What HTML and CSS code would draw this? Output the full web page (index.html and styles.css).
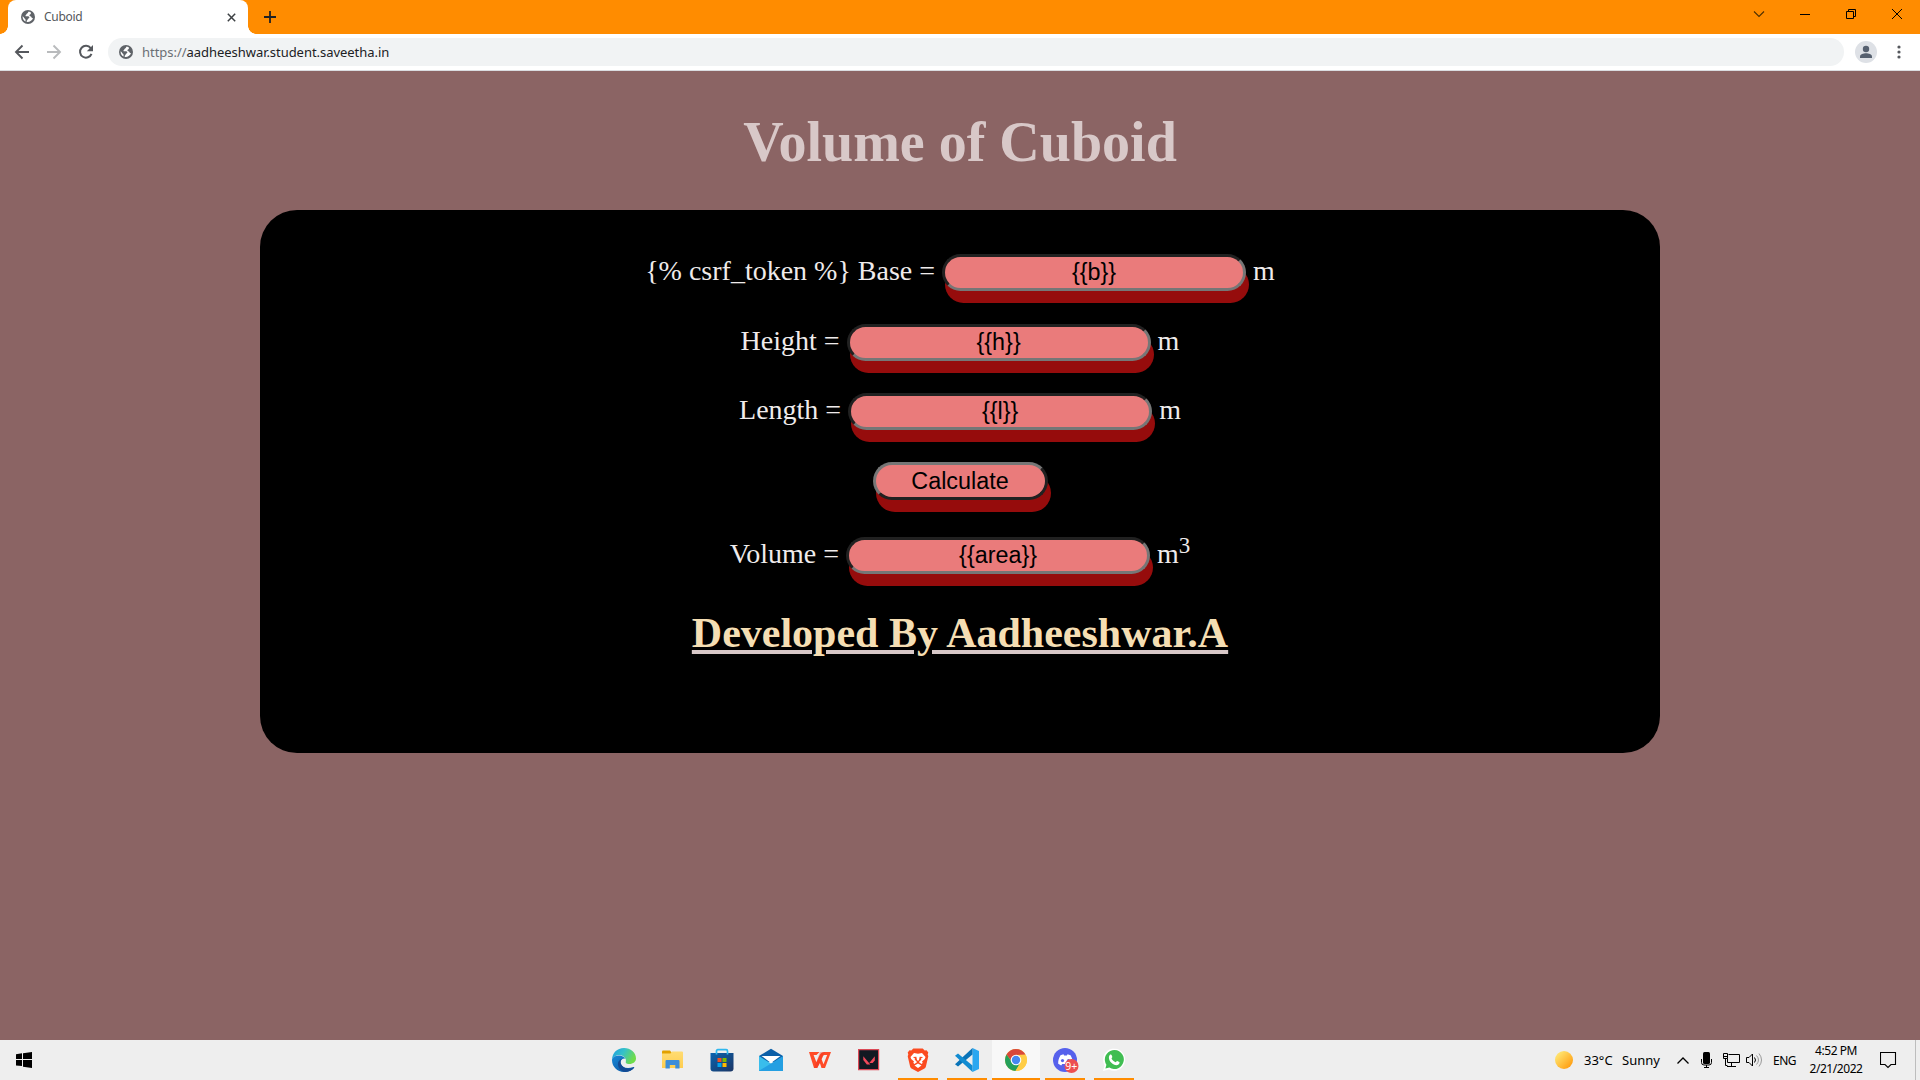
FILE: index.html
```html
<!DOCTYPE html>
<html lang="en">
<head>
<meta charset="utf-8">
<title>Cuboid</title>
<link rel="stylesheet" href="styles.css">
</head>
<body>
<svg width="0" height="0" class="defs">
  <defs>
    <symbol id="globe" viewBox="0 0 14 14"><circle cx="7" cy="7" r="7" fill="#5f6368"/><path d="M7.8 1.6C7 2.4 6.9 3.3 5.8 3.7c-.6.3-.4 1.2-1.1 1.5-.5.3-.3 1 .3 1 1.200 0 2.400-.2 3.100.6.5.7.2 1.500-.6 1.800-.9.300-.6 1.300-1.300 1.700-.5.300-.6 1-.4 1.700C8.600 12.300 11.400 10.700 12.100 8.100c-1 .3-1.600-.2-1.700-1-.1-.8-1-.7-1.600-1.100-.8-.6-.1-1.600.6-1.700.6-.1.300-1 .7-1.500C9.400 2.100 8.600 1.700 7.800 1.600zM1.600 6.300c-.2 2.400 1.200 4.500 3 5.300.1-.9-.2-1.300-.1-2 .1-.8-1-1-1.300-1.700C2.900 7.200 2.200 6.800 1.600 6.300z" fill="#fff"/></symbol>
    <linearGradient id="edgeTop" x1="0" y1="0" x2="1" y2="0.400"><stop offset="0" stop-color="#1b9de2"/><stop offset=".5" stop-color="#35c1c9"/><stop offset="1" stop-color="#6fdc4b"/></linearGradient>
    <linearGradient id="edgeLow" x1="0" y1="0" x2="1" y2="1"><stop offset="0" stop-color="#1689d8"/><stop offset="1" stop-color="#0c4f9c"/></linearGradient>
    <linearGradient id="bag" x1="0" y1="0" x2="1" y2="1"><stop offset="0" stop-color="#0a64b0"/><stop offset="1" stop-color="#1c3564"/></linearGradient>
    <linearGradient id="sun" x1="0" y1="0" x2="1" y2="1"><stop offset="0.200" stop-color="#ffe06a"/><stop offset="1" stop-color="#ff9100"/></linearGradient>
    <linearGradient id="fold" x1="0" y1="0" x2="0" y2="1"><stop offset="0" stop-color="#ffdc73"/><stop offset="1" stop-color="#ffcd4f"/></linearGradient>
  </defs>
</svg>

<header class="tabstrip">
  <div class="tab">
    <svg class="favicon" width="14" height="14"><use href="#globe"/></svg>
    <span class="tab-title">Cuboid</span>
    <svg class="tab-close" width="9" height="9"><path d="M.8.8l7.400 7.400M8.200.8L.8 8.200" stroke="#3c4043" stroke-width="1.500"/></svg>
  </div>
  <svg class="new-tab" width="12" height="12"><path d="M6 0v12M0 6h12" stroke="#202124" stroke-width="1.800"/></svg>
  <div class="window-buttons">
    <svg width="46" height="28"><path d="M18 11.500l5 5 5-5" fill="none" stroke="#4d3000" stroke-width="1.100"/></svg>
    <svg width="46" height="28"><path d="M18 14.500h10" stroke="#000"/></svg>
    <svg width="46" height="28"><path d="M18.500 11.500h7v7h-7zM20.500 11.500v-2h7v7h-2" fill="none" stroke="#000"/></svg>
    <svg width="46" height="28"><path d="M18 9l10 10M28 9l-10 10" stroke="#000"/></svg>
  </div>
</header>

<nav class="toolbar">
  <div class="nav-buttons">
    <svg width="32" height="36"><path d="M29 18H16.500M22.500 11.500L16 18l6.500 6.500" fill="none" stroke="#55585d" stroke-width="1.900"/></svg>
    <svg width="32" height="36"><path d="M15 18h12.500M21.500 11.500L28 18l-6.500 6.500" fill="none" stroke="#b9bbbd" stroke-width="1.900"/></svg>
    <svg width="32" height="36"><path d="M26.700 14.200a5.900 5.900 0 1 0 .8 5.600" fill="none" stroke="#55585d" stroke-width="2"/><path d="M29 11v6.200h-6.200z" fill="#55585d"/></svg>
  </div>
  <div class="omnibox">
    <svg width="14" height="14"><use href="#globe"/></svg>
    <span class="url"><span class="scheme">https://</span>aadheeshwar.student.saveetha.in</span>
  </div>
  <svg class="avatar" width="22" height="22"><circle cx="11" cy="11" r="11" fill="#dee1e6"/><circle cx="11" cy="8" r="3.200" fill="#56606f"/><path d="M5 17v-1.500c0-2.200 3.500-3.300 6-3.300s6 1.100 6 3.300V17z" fill="#56606f"/></svg>
  <svg class="menu" width="4" height="14"><g fill="#55585d"><circle cx="2" cy="2" r="1.600"/><circle cx="2" cy="7" r="1.600"/><circle cx="2" cy="12" r="1.600"/></g></svg>
</nav>

<main class="page">
  <h1>Volume of Cuboid</h1>
  <form class="card">
    <div class="row">{% csrf_token %} Base = <input class="pill" type="text" value="{{b}}"> m</div>
    <div class="row">Height = <input class="pill" type="text" value="{{h}}"> m</div>
    <div class="row">Length = <input class="pill" type="text" value="{{l}}"> m</div>
    <div class="row"><button class="pill calc" type="button">Calculate</button></div>
    <div class="row result">Volume = <input class="pill" type="text" value="{{area}}"> m<sup>3</sup></div>
    <h2>Developed By Aadheeshwar.A</h2>
  </form>
</main>

<footer class="taskbar">
  <svg class="start" width="16" height="16"><path d="M0 2.200L6 1.300V7H0zM7 1.200L16 0v7H7zM0 8h6v6L0 13.500zM7 8h9v8l-9-1.200z"/></svg>
  <div class="apps">
    <div class="app"><svg width="24" height="24" viewBox="0 0 24 24"><path d="M12 0C5 0 .3 5 0 11.500 2 7.500 6 6.200 9 7.200c4 1.300 5.500 4 4.800 6.500-.2 1 .2 2.300 3.500 2.300 4 0 6.700-2.500 6.700-5.500C24 4.500 18.500 0 12 0z" fill="url(#edgeTop)"/><path d="M0 11.500C1 8.500 4.500 7 8 7.500c3.500.5 5.500 3 5.500 3-3.500-.5-5.500 2-4.700 5 1 3.800 6 6 12.700 3.500.5-.2 1 .1.600.7C20 22.500 16.500 24 12 24 5 24-.2 18.500 0 11.500z" fill="url(#edgeLow)"/><path d="M8.800 15.500c-.8-3 .7-4.800 2.700-5-3.500.5-6 3-5.500 6.500.4 3.700 3.500 6.500 7.500 6.900 4 0 7-2 8.800-4.400-6 2.800-12 .5-13.500-4z" fill="#134a93"/></svg></div>
    <div class="app"><svg class="folder" width="24" height="24" viewBox="0 0 24 24"><path d="M2 3.500q0-1 1-1h7l2 2.500v3H2z" fill="#e2a100"/><path d="M2 5.500h8.500l1.500-2h10q1 0 1 1V20H2z" fill="url(#fold)"/><path d="M5.500 20.500V13q0-1 1-1h12q1 0 1 1v7.500h-4.200V17h-5.500v3.500z" fill="#3c8dd9"/></svg></div>
    <div class="app"><svg width="24" height="24" viewBox="0 0 24 24"><path d="M.5 5h23v15.500q0 3-3 3h-17q-3 0-3-3z" fill="url(#bag)"/><path d="M6.500 6.500V3q0-1.300 1.300-1.300h8.400q1.300 0 1.300 1.300v3.500" fill="none" stroke="#2fb7ee" stroke-width="1.700"/><path d="M7.500 10h4v4h-4z" fill="#f25022"/><path d="M12.500 10h4v4h-4z" fill="#7fba00"/><path d="M7.500 15h4v4h-4z" fill="#00a4ef"/><path d="M12.500 15h4v4h-4z" fill="#ffb900"/></svg></div>
    <div class="app"><svg width="24" height="24" viewBox="0 0 24 24"><path d="M0 8L12 .8 24 8v6H0z" fill="#0b5fa8"/><path d="M2.500 8h19l-9.500 7z" fill="#fff"/><path d="M0 8l24 15H0z" fill="#39bdec"/><path d="M24 8v15H0v-.3L12 15.500z" fill="#249fe2"/></svg></div>
    <div class="app"><svg width="24" height="24" viewBox="0 0 24 24"><path d="M1 4h10.500l-3 3H5.600l2.800 7.200 3.300-7.200q1.400-3 4.800-3H23l-6 16h-3.500l-1.600-5-2.600 5H6z" fill="#ff4b27"/><path d="M19.200 7h-2.600q-1.200 0-1.700 1.200l-1.300 3 1.900 5z" fill="#efeeee"/><path d="M12 4h5l-5.800 12L9.300 20H6.100z" fill="#e8281c" opacity=".3"/></svg></div>
    <div class="app"><svg width="24" height="24" viewBox="0 0 24 24"><path d="M1.600 1.600h20v20h-20z" fill="#121922" stroke="#db4a57" stroke-width="1.200"/><path d="M6.300 8.200l7 8.200H9.800l-3.500-4.500zM17.800 8.200v4.200L15.600 15h-3.300z" fill="#f1495a"/></svg></div>
    <div class="app running"><svg width="24" height="24" viewBox="0 0 24 24"><path d="M7.300.5h9.400l2 2 1.800-.3 1.800 2.300-.6 2 .6 1.700-2.400 10.300q-.4 1.300-1.400 2L12 24l-6.500-3.500q-1-.7-1.400-2L1.700 8.200l.6-1.700-.6-2 1.800-2.300 1.800.3z" fill="#fb4b20"/><path d="M8 5l4 .7L16 5l3.500 4-.7 2-2.800 2.500.7 1.200-1 1.300-2.500-1.500.3-1.200 1.800-1.600-.3-1.200 2.200-1.400-3.500-.3-.8 3.500-.9.400-.9-.4-.8-3.500-3.500.3L9 10.500l-.3 1.200 1.800 1.600.3 1.200L8.300 16l-1-1.300.7-1.200L5.200 11l-.7-2zM12 15.500l3.500 2L12 20l-3.500-2.500z" fill="#fff"/></svg></div>
    <div class="app running"><svg width="24" height="24" viewBox="0 0 24 24"><path d="M17.500 0L24 3v18l-6.500 3z" fill="#2aa7f0"/><path d="M17.500 0v6.500L3 18.500 0 16.200z" fill="#0873b8"/><path d="M0 7.800L3 5.500l14.500 12V24z" fill="#118bd1"/></svg></div>
    <div class="app running active"><svg width="24" height="24" viewBox="0 0 24 24"><circle cx="12" cy="12" r="11" fill="#ffcf48"/><path d="M2.500 6.500A11 11 0 0 1 21.500 6.500L12 7 8 14z" fill="#d9483b"/><path d="M2.500 6.500A11 11 0 0 0 11.500 23l5-8.500L8 14z" fill="#24a05a"/><path d="M12 7h9.800a11 11 0 0 1-10.300 16l5-8.500z" fill="#ffcd46"/><circle cx="12" cy="12" r="5.300" fill="#fff"/><circle cx="12" cy="12" r="4.200" fill="#4688f1"/></svg></div>
    <div class="app running"><svg width="26" height="26" viewBox="0 0 26 26" class="discord"><circle cx="12" cy="12" r="12" fill="#5661ec"/><path d="M7.500 7.300l3-1 .6 1.200h2.800l.6-1.200 3 1c1.500 2.500 2.500 5.500 2.300 8.500l-3 1.700-1-1.500h-6.600l-1 1.500-3-1.700c-.2-3 .8-6 2.300-8.500z" fill="#fff"/><circle cx="9.500" cy="12.600" r="1.600" fill="#5661ec"/><circle cx="15.500" cy="12.600" r="1.600" fill="#5661ec"/><circle cx="18.500" cy="18" r="7" fill="#ed4f50"/><text x="18.200" y="21.600" text-anchor="middle" class="badge-text">9+</text></svg></div>
    <div class="app running"><svg width="24" height="24" viewBox="0 0 24 24"><path d="M1 23l1.600-5.800A11 11 0 1 1 7 21.400z" fill="#fff"/><path d="M3.400 20.600l1-3.900a9.500 9.500 0 1 1 3 2.900z" fill="#40bd52"/><path d="M8 6.800c.5-.5 1.300-.5 1.600.2l.7 1.800c.2.600-.8 1.500-.8 1.800 1 1.900 2.300 3 4.100 3.700.5.100 1.100-1.400 1.600-1.200l2.100 1c.7.400-.1 3.200-2.800 3.200-3.500 0-7.600-4-7.600-7.500 0-1.300.5-2.400 1.100-3z" fill="#fff"/></svg></div>
  </div>
  <div class="tray">
    <svg class="sun" width="18" height="18"><circle cx="9" cy="9" r="9" fill="url(#sun)"/></svg>
    <span class="temp">33°C</span><span class="sky">Sunny</span>
    <svg class="up" width="12" height="7"><path d="M.5 6.500L6 1l5.500 5.500" fill="none" stroke="#000" stroke-width="1.300"/></svg>
    <svg class="mic" width="11" height="16"><rect x="2" y="0" width="7" height="12" rx="1.500"/><path d="M.5 7v3.500q0 2.500 2.500 2.500h5q2.500 0 2.500-2.500V7M5.500 13v2.500M3 15.500h5" fill="none" stroke="#000"/></svg>
    <svg class="net" width="17" height="14"><path d="M5.500 1.500h11v8h-12V5.500M8.500 9.500v4M4 13.500h9M.5.500h4v5h-4zM0 3.500h4M2.500 5.500v7h2" fill="none" stroke="#000"/></svg>
    <svg class="vol" width="17" height="14"><path d="M.5 4.500H3L6.500 1v12L3 9.500H.5z" fill="none" stroke="#000"/><path d="M8.500 4.500q2 2.500 0 5" fill="none" stroke="#000"/><path d="M10.500 2.500q4 4.500 0 9M13 .5q5 6.500 0 13" fill="none" stroke="#999"/></svg>
    <span class="lang">ENG</span>
    <div class="clock"><span class="time">4:52 PM</span><span class="date">2/21/2022</span></div>
    <svg class="notes" width="17" height="17"><path d="M.5.500h15v12H11l-3 3-3-3H.5z" fill="none" stroke="#000" stroke-width="1.100"/></svg>
    <span class="peek"></span>
  </div>
</footer>
</body>
</html>
```
FILE: styles.css
```css
* { box-sizing: border-box; }
body {
  margin: 0;
  width: 1920px;
  height: 1080px;
  overflow: hidden;
  display: flex;
  flex-direction: column;
  background: #8b6464;
  font-family: "Noto Sans", sans-serif;
}
svg { display: block; flex: none; }
.defs { position: absolute; }

.tabstrip {
  height: 34px;
  flex: none;
  display: flex;
  background: #ff8c00;
  padding-left: 8px;
}
.tab {
  position: relative;
  width: 240px;
  background: #fff;
  border-radius: 8px 8px 0 0;
  display: flex;
  align-items: center;
  padding: 0 12px 0 13px;
}
.tab::before, .tab::after {
  content: "";
  position: absolute;
  bottom: 0;
  width: 8px;
  height: 8px;
}
.tab::before { left: -8px; background: radial-gradient(circle at 0 0, transparent 7.5px, #fff 8px); }
.tab::after { right: -8px; background: radial-gradient(circle at 100% 0, transparent 7.5px, #fff 8px); }
.tab-title { margin-left: 9px; font-size: 12px; line-height: 34px; color: #54575b; letter-spacing: -.3px; }
.tab-close { margin-left: auto; }
.new-tab { margin: 11px 0 0 16px; }
.window-buttons { display: flex; margin-left: auto; }

.toolbar {
  height: 37px;
  flex: none;
  display: flex;
  align-items: center;
  background: #fff;
  border-bottom: 1px solid #dadce0;
}
.nav-buttons { display: flex; width: 108px; }
.omnibox {
  width: 1736px;
  height: 28px;
  border-radius: 14px;
  background: #f1f3f4;
  display: flex;
  align-items: center;
  padding-left: 11px;
}
.url { margin-left: 9px; font-size: 13px; line-height: 28px; color: #202124; white-space: nowrap; letter-spacing: -.04px; }
.scheme { color: #6b6f74; }
.avatar { margin-left: 11px; }
.menu { margin-left: 20px; }

.page {
  flex: 1;
  font-family: "Liberation Serif", serif;
  font-size: 28px;
}
h1 {
  margin: 0;
  height: 139px;
  padding-top: 39px;
  font-size: 56px;
  line-height: 64px;
  text-align: center;
  color: #d8c8c8;
}
.card {
  width: 1400px;
  height: 543px;
  margin: 0 auto;
  padding-top: 42px;
  border-radius: 37px;
  background: #000;
  color: #efebeb;
  text-align: center;
}
.row { height: 69.600px; line-height: 37px; white-space: nowrap; }
.row sup { font-size: 23px; line-height: 0; }
.result { margin-top: 5px; }
.pill {
  width: 304px;
  height: 37px;
  margin: 0;
  padding: 0;
  border: 3px solid;
  border-color: #212121 #767676 #767676 #212121;
  border-radius: 19px;
  background: #ea7b7b;
  box-shadow: 3px 12px 0 #960c0c;
  color: #000;
  font: 23.330px "Liberation Sans", sans-serif;
  text-align: center;
}
.calc {
  width: 175px;
  height: 38px;
  border-color: #767676 #212121 #212121 #767676;
}
h2 {
  margin: 0;
  padding-top: 4px;
  font-size: 42px;
  line-height: 48px;
  color: #f5deb3;
  text-decoration: underline 4px #d8c8c8;
  text-underline-offset: 3px;
}

.taskbar {
  height: 40px;
  flex: none;
  display: grid;
  grid-template-columns: 600px 1fr 366px;
  align-items: center;
  background: #eee;
  color: #000;
}
.start { margin-left: 16px; }
.apps { display: flex; height: 40px; }
.app {
  width: 48px;
  margin-right: 1px;
  display: flex;
  align-items: center;
  justify-content: center;
}
.folder { margin-right: 2px; }
.running { background: linear-gradient(#ff8c00, #ff8c00) center bottom / 40px 2px no-repeat; }
.active { background: linear-gradient(#ff8c00, #ff8c00) center bottom / 48px 2px no-repeat #f8f8f8; }
.discord { margin: 2px -2px 0 0; }
.badge-text { font: 10.500px "Noto Sans", sans-serif; fill: #fff; }
.tray { display: flex; align-items: center; height: 40px; font-size: 13px; }
.temp { width: 38px; margin-left: 11px; white-space: nowrap; }
.sky { width: 55px; }
.sun { margin-left: 1px; }
.up { margin-right: 12px; }
.mic { margin-right: 11px; }
.net { margin-right: 6px; }
.lang { width: 28px; margin-left: 10px; font-size: 12px; letter-spacing: -.5px; }
.clock {
  width: 72px;
  margin-left: -1px;
  display: flex;
  flex-direction: column;
  align-items: center;
  font-size: 12px;
  line-height: 18px;
  letter-spacing: -.450px;
}
.notes { margin-left: 8px; }
.peek { width: 1px; height: 40px; margin-left: auto; margin-right: 4px; background: #bdbdbd; }
```
